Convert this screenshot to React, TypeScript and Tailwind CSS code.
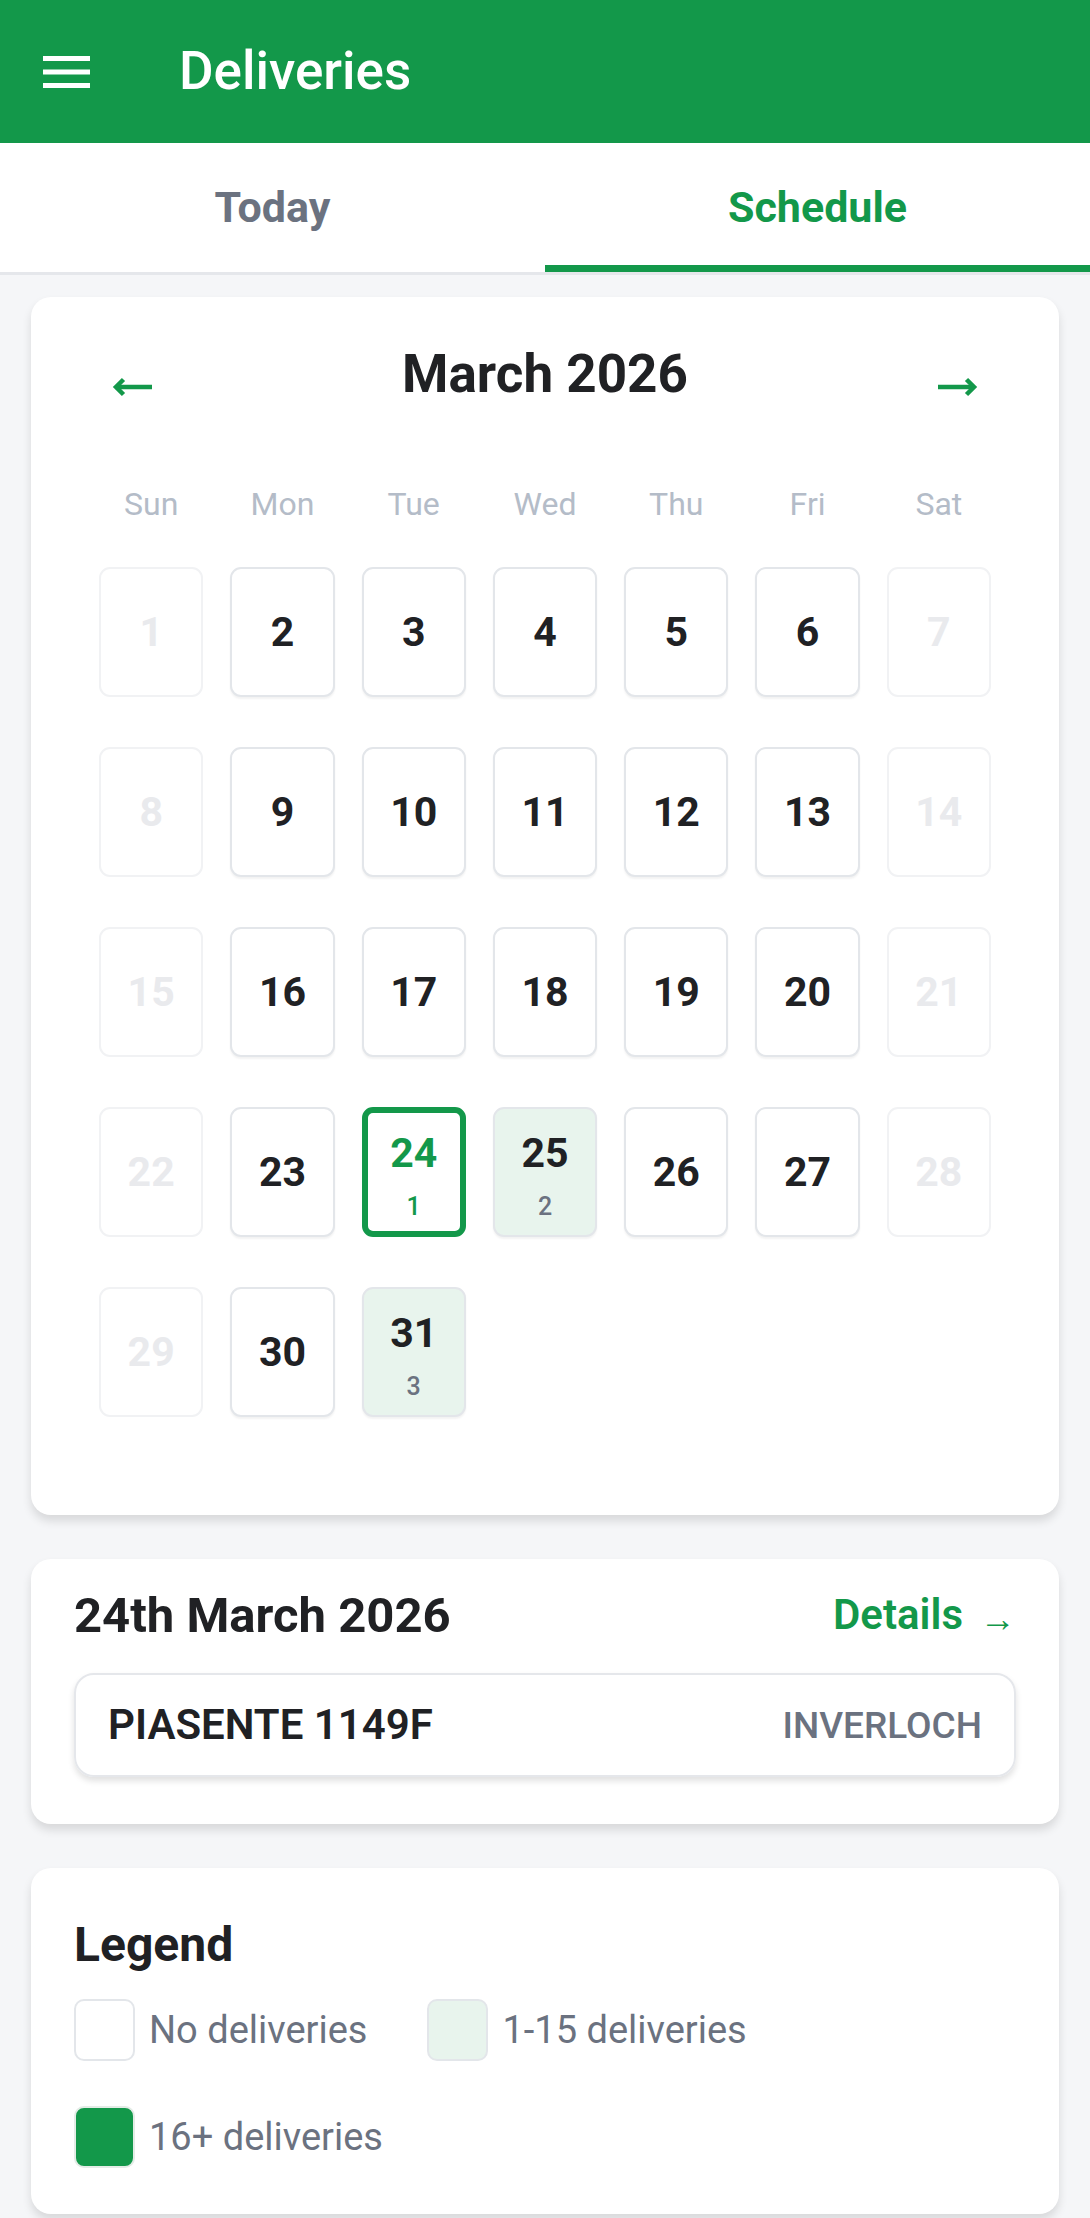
import React from "react"

const GREEN = "#13984a"

const weekdays = ["Sun", "Mon", "Tue", "Wed", "Thu", "Fri", "Sat"]
const counts: Record<number, number> = { 24: 1, 25: 2, 31: 3 }
const selected = 24

function Arrow({ dir }: { dir: "left" | "right" }) {
  return (
    <svg
      width="42"
      height="20"
      viewBox="0 0 42 20"
      className={dir === "right" ? "rotate-180" : ""}
      fill="none"
      stroke={GREEN}
      strokeWidth="4.5"
    >
      <path d="M5 10H41" />
      <path d="M12.5 2.5L5 10L12.5 17.5" />
    </svg>
  )
}

function DayCell({ day }: { day: number }) {
  const dow = (day - 1) % 7
  const disabled = dow === 0 || dow === 6
  const count = counts[day]
  const isSelected = day === selected

  if (disabled) {
    return (
      <div className="h-[130px] rounded-[11px] border-2 border-[#f1f2f4] bg-white flex items-center justify-center text-[41px] font-bold leading-none text-[#e9eaed]">
        {day}
      </div>
    )
  }

  if (count) {
    return (
      <div
        className={
          isSelected
            ? "h-[130px] rounded-[11px] border-[6px] border-[#13984a] bg-white flex flex-col items-center pt-[20px]"
            : "h-[130px] rounded-[11px] border-2 border-[#e3e6ea] bg-[#e8f4ed] flex flex-col items-center pt-[24px] shadow-[0_2px_2px_rgba(0,0,0,0.05)]"
        }
      >
        <span
          className={
            isSelected
              ? "text-[41px] font-bold leading-none text-[#13984a]"
              : "text-[41px] font-bold leading-none text-[#202124]"
          }
        >
          {day}
        </span>
        <span
          className={
            isSelected
              ? "mt-[20px] text-[25px] font-medium leading-none text-[#13984a]"
              : "mt-[20px] text-[25px] font-medium leading-none text-[#6b7280]"
          }
        >
          {count}
        </span>
      </div>
    )
  }

  return (
    <div className="h-[130px] rounded-[11px] border-2 border-[#e3e6ea] bg-white flex items-center justify-center text-[41px] font-bold leading-none text-[#202124] shadow-[0_2px_2px_rgba(0,0,0,0.05)]">
      {day}
    </div>
  )
}

function LegendItem({ box, label }: { box: string; label: string }) {
  return (
    <div className="flex items-center gap-[14px]">
      <div className={box} />
      <span className="text-[38px] leading-none text-[#6b7280]">{label}</span>
    </div>
  )
}

export default function App() {
  const days = Array.from({ length: 31 }, (_, i) => i + 1)

  return (
    <div className="min-h-screen w-[1090px] bg-[#f5f6f8] font-['Roboto',sans-serif]">
      {/* Top bar */}
      <div className="h-[143px] bg-[#13984a] flex items-center pl-[43px]">
        <svg width="47" height="32" viewBox="0 0 47 32" fill="white">
          <rect x="0" y="0" width="47" height="5" />
          <rect x="0" y="13.5" width="47" height="5" />
          <rect x="0" y="27" width="47" height="5" />
        </svg>
        <h1 className="ml-[89px] text-[53px] font-medium leading-none text-white">Deliveries</h1>
      </div>

      {/* Tabs */}
      <div className="flex h-[132px] bg-white border-b-[3px] border-[#e5e7eb]">
        <div className="flex-1 flex items-center justify-center text-[43px] font-bold text-[#6b7280]">
          Today
        </div>
        <div className="flex-1 flex flex-col">
          <div className="flex-1 flex items-center justify-center text-[43px] font-bold text-[#13984a] pt-[7px]">
            Schedule
          </div>
          <div className="h-[7px] bg-[#13984a]" />
        </div>
      </div>

      <div className="flex flex-col gap-[44px] px-[31px] pt-[22px] pb-[5px]">
        {/* Calendar */}
        <div className="rounded-[20px] bg-white shadow-[0_6px_10px_rgba(0,0,0,0.12)] px-[68px] pt-[40px] pb-[98px]">
          <div className="flex h-[74px] items-center justify-between px-[12px]">
            <span className="mt-[26px]">
              <Arrow dir="left" />
            </span>
            <h2 className="text-[53px] font-bold leading-none text-[#202124]">March 2026</h2>
            <span className="mt-[26px]">
              <Arrow dir="right" />
            </span>
          </div>

          <div className="mt-[71px] grid grid-cols-7 gap-x-[27px] h-[44px]">
            {weekdays.map((d) => (
              <div key={d} className="flex items-center justify-center text-[32px] leading-none text-[#b4bcc8]">
                {d}
              </div>
            ))}
          </div>

          <div className="mt-[41px] grid grid-cols-7 gap-x-[27px] gap-y-[50px]">
            {days.map((d) => (
              <DayCell key={d} day={d} />
            ))}
          </div>
        </div>

        {/* Selected day */}
        <div className="rounded-[20px] bg-white shadow-[0_6px_10px_rgba(0,0,0,0.12)] px-[43px] pt-[33px] pb-[47px]">
          <div className="flex h-[46px] items-center justify-between">
            <h3 className="text-[49px] font-bold leading-none text-[#202124]">24th March 2026</h3>
            <span className="flex items-center text-[42px] font-semibold leading-none text-[#13984a]">
              Details
              <span className="ml-[17px] mt-[8px] text-[36px] font-normal">→</span>
            </span>
          </div>
          <div className="mt-[35px] flex h-[104px] items-center justify-between rounded-[20px] border-2 border-[#e5e7eb] px-[32px] shadow-[0_4px_6px_rgba(0,0,0,0.12)]">
            <span className="text-[42px] font-semibold leading-none text-[#202124]">PIASENTE 1149F</span>
            <span className="text-[37px] font-medium leading-none text-[#6b7280]">INVERLOCH</span>
          </div>
        </div>

        {/* Legend */}
        <div className="rounded-[20px] bg-white shadow-[0_6px_10px_rgba(0,0,0,0.12)] px-[43px] pt-[53px] pb-[46px]">
          <h3 className="text-[48px] font-bold leading-none text-[#202124]">Legend</h3>
          <div className="mt-[30px] flex flex-wrap gap-x-[60px] gap-y-[45px]">
            <LegendItem
              box="w-[61px] h-[62px] rounded-[10px] border-2 border-[#e3e6ea] bg-white"
              label="No deliveries"
            />
            <LegendItem
              box="w-[61px] h-[62px] rounded-[10px] border-2 border-[#e3e6ea] bg-[#e8f4ed]"
              label="1-15 deliveries"
            />
            <LegendItem
              box="w-[61px] h-[62px] rounded-[10px] border-2 border-[#e3ece6] bg-[#13984a]"
              label="16+ deliveries"
            />
          </div>
        </div>
      </div>
    </div>
  )
}
